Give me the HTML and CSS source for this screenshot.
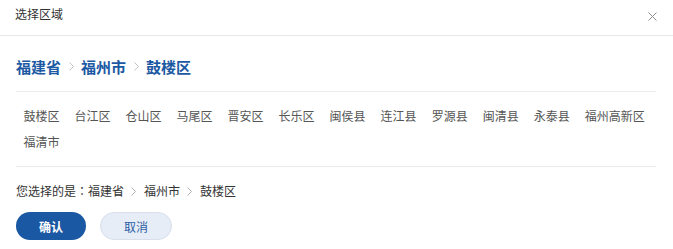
FILE: index.html
```html
<!DOCTYPE html>
<html lang="zh-CN">
<head>
    <meta charset="UTF-8">
    <meta name="viewport" content="width=device-width, initial-scale=1.0">
    <title>选择区域</title>
    <link rel="stylesheet" href="styles.css">
</head>
<body>
    <div class="dialog">
        <div class="dialog-header">
            <span class="dialog-title">选择区域</span>
            <svg class="close-icon" viewBox="0 0 9 9" width="9" height="9">
                <path d="M0.5 0.5 L8.5 8.5 M8.5 0.5 L0.5 8.5" stroke="#8f8f8f" stroke-width="1" fill="none" />
            </svg>
        </div>
        <div class="dialog-body">
            <div class="crumbs">
                <span class="crumb">福建省</span>
                <svg class="crumb-sep" viewBox="0 0 5 9" width="5" height="9">
                    <path d="M0.5 0.5 L4.5 4.5 L0.5 8.5" stroke="#c4c4c4" stroke-width="1" fill="none" />
                </svg>
                <span class="crumb">福州市</span>
                <svg class="crumb-sep" viewBox="0 0 5 9" width="5" height="9">
                    <path d="M0.5 0.5 L4.5 4.5 L0.5 8.5" stroke="#c4c4c4" stroke-width="1" fill="none" />
                </svg>
                <span class="crumb">鼓楼区</span>
            </div>
            <ul class="area-list">
                <li>鼓楼区</li>
                <li>台江区</li>
                <li>仓山区</li>
                <li>马尾区</li>
                <li>晋安区</li>
                <li>长乐区</li>
                <li>闽侯县</li>
                <li>连江县</li>
                <li>罗源县</li>
                <li>闽清县</li>
                <li>永泰县</li>
                <li>福州高新区</li>
                <li>福清市</li>
            </ul>
            <div class="selected">
                <span>您选择的是<span class="colon" lang="zh-TW">：</span></span>
                <span>福建省</span>
                <svg class="sel-sep" viewBox="0 0 5 9" width="5" height="9">
                    <path d="M0.5 0.5 L4.5 4.5 L0.5 8.5" stroke="#b0b0b0" stroke-width="1" fill="none" />
                </svg>
                <span>福州市</span>
                <svg class="sel-sep" viewBox="0 0 5 9" width="5" height="9">
                    <path d="M0.5 0.5 L4.5 4.5 L0.5 8.5" stroke="#b0b0b0" stroke-width="1" fill="none" />
                </svg>
                <span>鼓楼区</span>
            </div>
            <div class="actions">
                <button class="btn btn-primary">确认</button>
                <button class="btn btn-cancel">取消</button>
            </div>
        </div>
    </div>
</body>
</html>
```

FILE: styles.css
```css
* {
    margin: 0;
    padding: 0;
    box-sizing: border-box;
}
body {
    background: #ffffff;
    font-family: "Noto Sans CJK SC", "Noto Sans", Arial, sans-serif;
    font-size: 12px;
    color: #333333;
}
/* Header */
.dialog-header {
    display: flex;
    justify-content: space-between;
    align-items: flex-start;
    height: 36px;
    padding: 6px 16px 0 15px;
    border-bottom: 1px solid #e8e8e8;
}
.dialog-title {
    font-size: 12px;
    line-height: 16px;
    color: #333333;
}
.close-icon {
    margin-top: 6px;
}
/* Body */
.dialog-body {
    padding: 0 17px 0 16px;
}
.crumbs {
    display: flex;
    align-items: center;
    padding: 20px 0 14px;
    border-bottom: 1px solid #ececec;
}
.crumb {
    font-size: 15px;
    line-height: 21px;
    font-weight: bold;
    color: #1c59a3;
}
.crumb-sep {
    margin: 0 7px 0 8px;
}
/* Area list */
.area-list {
    list-style: none;
    display: flex;
    flex-wrap: wrap;
    padding: 11px 0;
    border-bottom: 1px solid #ececec;
}
.area-list li {
    padding: 0 7.5px;
    line-height: 26px;
    color: #555555;
    cursor: pointer;
}
/* Current selection */
.selected {
    display: flex;
    align-items: center;
    padding-top: 15px;
    line-height: 18px;
    color: #333333;
}
/* centred full-width colon */
.colon {
    font-family: "Noto Sans CJK TC", "Noto Sans CJK SC", sans-serif;
}
.sel-sep {
    margin: 0 8px 0 7px;
}
/* Buttons */
.actions {
    display: flex;
    gap: 14px;
    margin-top: 12px;
}
.btn {
    height: 28px;
    border-radius: 14px;
    font-family: inherit;
    font-size: 12px;
    cursor: pointer;
}
.btn-primary {
    width: 70px;
    border: none;
    background: #1b58a3;
    color: #ffffff;
    font-weight: bold;
}
.btn-cancel {
    width: 72px;
    border: 1px solid #d8dfea;
    background: #e7edf7;
    color: #2a5ea6;
}
```
